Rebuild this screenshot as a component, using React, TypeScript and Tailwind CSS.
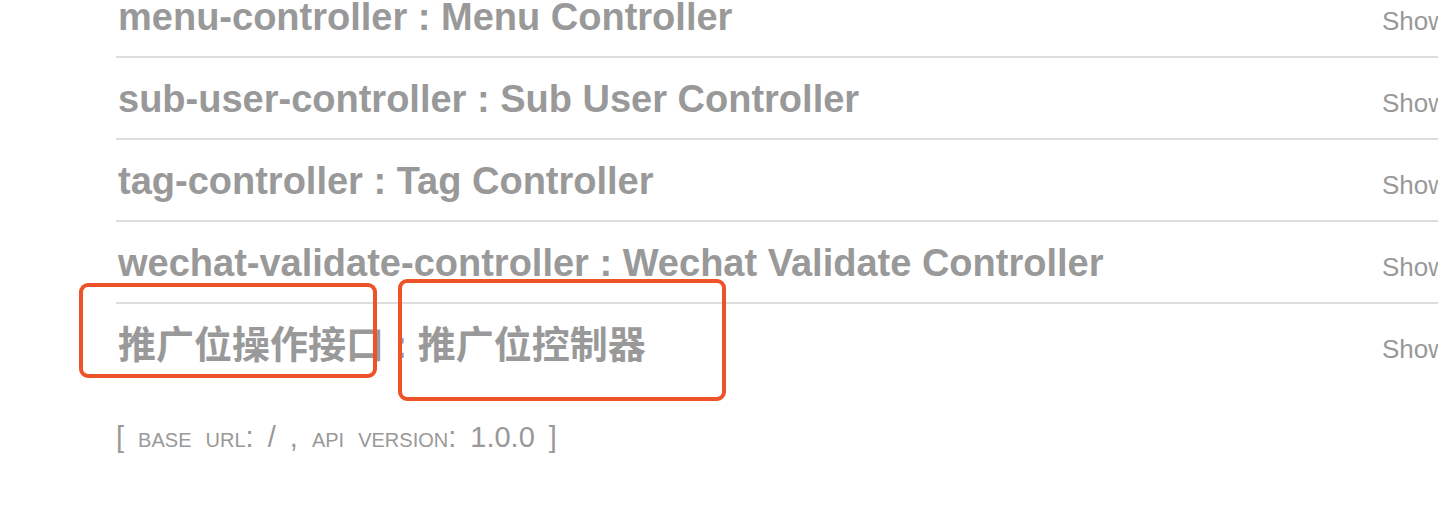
import React from 'react';

const resources = [
  { name: 'menu-controller', desc: 'Menu Controller' },
  { name: 'sub-user-controller', desc: 'Sub User Controller' },
  { name: 'tag-controller', desc: 'Tag Controller' },
  { name: 'wechat-validate-controller', desc: 'Wechat Validate Controller' },
  { name: '推广位操作接口', desc: '推广位控制器' },
];

function Resource({ name, desc, last }: { name: string; desc: string; last: boolean }) {
  return (
    <li className={`flex items-baseline pt-[22px] pb-[20px] ${last ? '' : 'border-b-2 border-[#dddddd]'}`}>
      <h2 className="w-[1266px] shrink-0 pl-[2px] text-[38px] leading-[38px] font-bold text-[#999999] whitespace-nowrap">
        {name} : {desc}
      </h2>
      <ul className="flex gap-3 text-[26px] leading-none text-[#999999] whitespace-nowrap">
        <li>Show/Hide</li>
        <li>|</li>
        <li>List Operations</li>
        <li>|</li>
        <li>Expand Operations</li>
      </ul>
    </li>
  );
}

export default function App() {
  return (
    <div
      className="relative w-[1438px] h-[520px] overflow-hidden bg-white"
      style={{ fontFamily: '"Liberation Sans", "Noto Sans CJK SC", sans-serif' }}
    >
      <div className="pl-[116px] -mt-[24px] w-[1900px]">
        <ul>
          {resources.map((r, i) => (
            <Resource key={r.name} name={r.name} desc={r.desc} last={i === resources.length - 1} />
          ))}
        </ul>
        <div className="mt-[37px] text-[29px] leading-[32px] text-[#999999] [font-variant:small-caps] [word-spacing:6px]">
          [ base url: / , api version: 1.0.0 ]
        </div>
      </div>

      {/* annotation boxes */}
      <div className="absolute left-[79px] top-[283px] w-[298px] h-[95px] border-[4px] border-[#ee5229] rounded-[9px]" />
      <div className="absolute left-[398px] top-[279px] w-[328px] h-[122px] border-[4px] border-[#ee5229] rounded-[9px]" />
    </div>
  );
}
